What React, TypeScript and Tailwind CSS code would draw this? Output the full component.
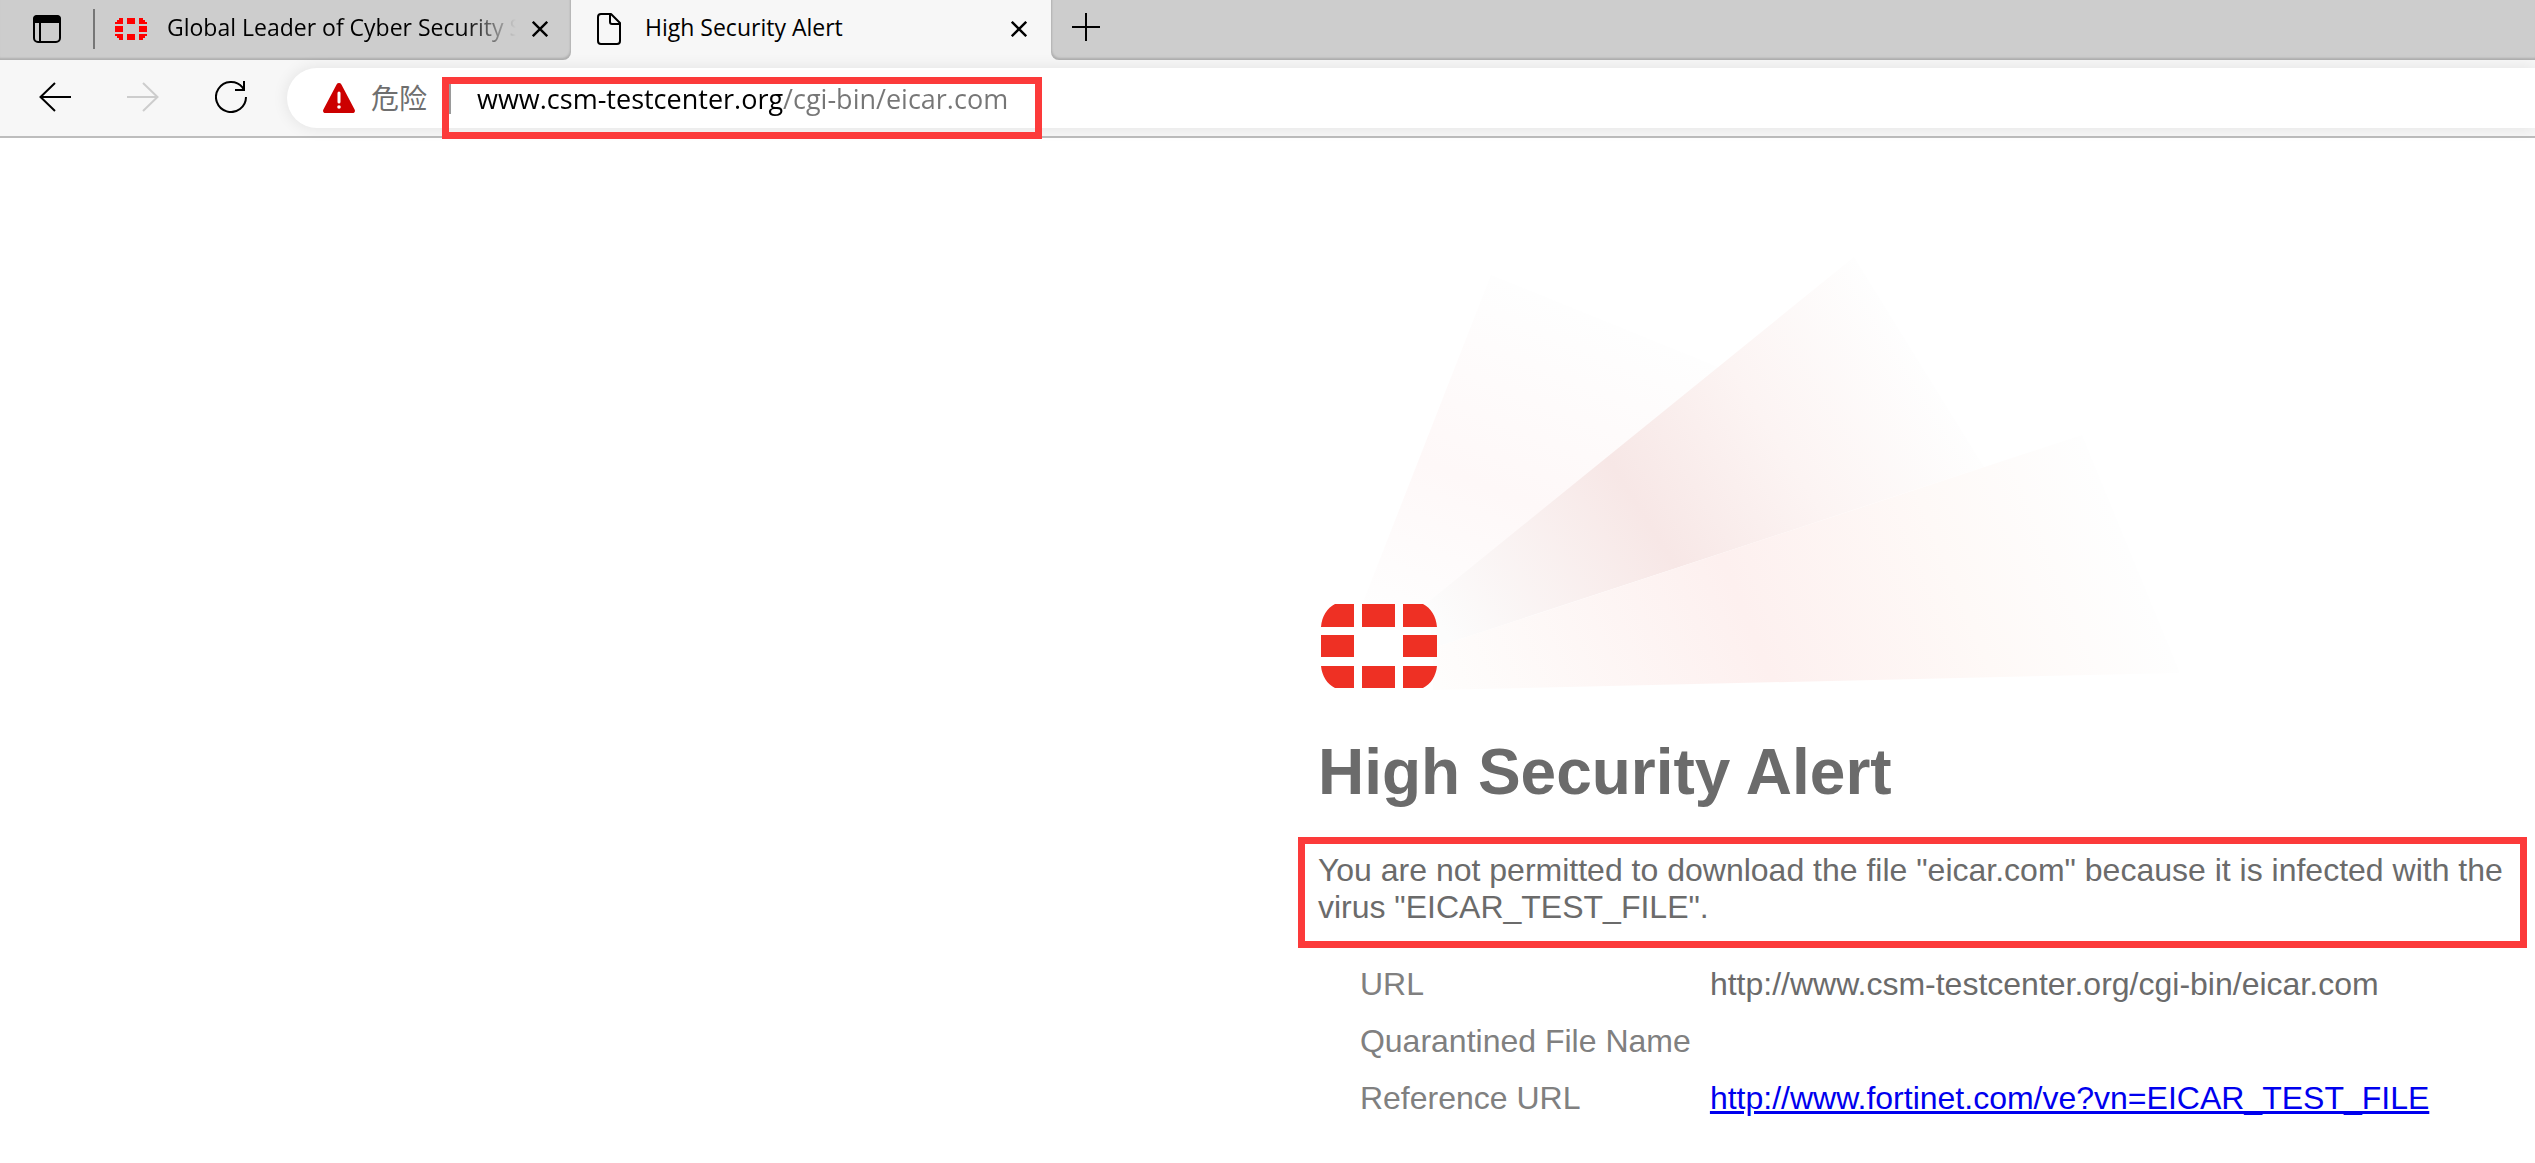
import React, { useState } from "react";

interface DetailRow {
  label: string;
  value?: string;
  href?: string;
}

const details: DetailRow[] = [
  { label: "URL", value: "http://www.csm-testcenter.org/cgi-bin/eicar.com" },
  { label: "Quarantined File Name" },
  {
    label: "Reference URL",
    value: "http://www.fortinet.com/ve?vn=EICAR_TEST_FILE",
    href: "http://www.fortinet.com/ve?vn=EICAR_TEST_FILE",
  },
];

function CloseIcon() {
  return (
    <svg className="h-4 w-4" viewBox="0 0 16 16" fill="none" stroke="#000" strokeWidth="2.4">
      <path d="M0.8 0.8 15.2 15.2M15.2 0.8 0.8 15.2" />
    </svg>
  );
}

function SmallLogo() {
  return (
    <svg className="h-[22px] w-8 shrink-0" viewBox="0 0 32 22" fill="#f00" shapeRendering="crispEdges">
      <path d="M4 0h4v6H0V4h2V2h2zM12 0h8v6h-8zM24 0h4v2h2v2h2v2h-8zM0 8h8v6H0zM24 8h8v6h-8zM0 16h8v6H4v-2H2v-2H0zM12 16h8v6h-8zM24 16h8v2h-2v2h-2v2h-4z" />
    </svg>
  );
}

function TabStrip() {
  return (
    <div className="flex h-[60px] bg-[#f7f7f7] text-[23px] leading-8 text-black">
      <div className="flex w-[571px] shrink-0 items-center rounded-br-lg bg-[#cdcdcd] pb-0.5 pl-[33px] pr-[23px] shadow-[inset_-1px_-2px_2px_rgba(0,0,0,0.14)]">
        <button type="button" aria-label="Tab actions" className="shrink-0">
          <svg className="h-7 w-7" viewBox="0 0 28 28" fill="none">
            <rect x="1" y="1" width="26" height="26" rx="4" stroke="#000" strokeWidth="2" />
            <path d="M0 8V4a4 4 0 0 1 4-4h20a4 4 0 0 1 4 4v4z" fill="#000" />
            <path d="M7 8v19" stroke="#000" strokeWidth="2" />
          </svg>
        </button>
        <div className="ml-8 h-10 w-0.5 shrink-0 bg-[#767676]" />
        <div className="ml-5 flex min-w-0 flex-1 items-center">
          <SmallLogo />
          <span className="ml-5 min-w-0 flex-1 overflow-hidden pb-1 whitespace-nowrap mask-r-from-85% mask-r-to-100%">
            Global Leader of Cyber Security Solutions
          </span>
          <button type="button" aria-label="Close tab" className="ml-4 shrink-0">
            <CloseIcon />
          </button>
        </div>
      </div>
      <div className="flex w-[480px] shrink-0 items-center pb-0.5 pl-[26px] pr-6">
        <svg className="h-8 w-6 shrink-0" viewBox="0 0 24 32" fill="none" stroke="#000" strokeWidth="2" strokeLinejoin="round">
          <path d="M4 1h10l9 9v18a3 3 0 0 1-3 3H4a3 3 0 0 1-3-3V4a3 3 0 0 1 3-3z" />
          <path d="M13 1v8a2 2 0 0 0 2 2h8" />
        </svg>
        <span className="ml-6 flex-1 pb-1">High Security Alert</span>
        <button type="button" aria-label="Close tab">
          <CloseIcon />
        </button>
      </div>
      <div className="flex flex-1 items-center rounded-bl-lg bg-[#cdcdcd] pb-1.5 pl-[21px] shadow-[inset_1px_-2px_2px_rgba(0,0,0,0.14)]">
        <button type="button" aria-label="New tab">
          <svg className="h-7 w-7" viewBox="0 0 28 28" stroke="#000" strokeWidth="2">
            <path d="M0 14h28M14 0v28" />
          </svg>
        </button>
      </div>
    </div>
  );
}

function Toolbar() {
  const [address, setAddress] = useState("www.csm-testcenter.org/cgi-bin/eicar.com");

  return (
    <div className="flex h-[78px] border-b-2 border-[#bdbdbd] bg-[#f7f7f7] pl-[39px]">
      <div className="flex h-[74px] shrink-0 items-center gap-14">
        <button type="button" aria-label="Back">
          <svg className="h-8 w-8" viewBox="0 0 32 32" fill="none" stroke="#000" strokeWidth="2">
            <path d="M32 16H1M16 2 1.500 16 16 30" />
          </svg>
        </button>
        <button type="button" aria-label="Forward" disabled>
          <svg className="h-8 w-8" viewBox="0 0 32 32" fill="none" stroke="#cdcdcd" strokeWidth="2">
            <path d="M0 16h31M16 2l14.500 14L16 30" />
          </svg>
        </button>
        <button type="button" aria-label="Refresh">
          <svg className="h-8 w-8" viewBox="0 0 32 32" fill="none" stroke="#000" strokeWidth="2">
            <path d="M31 16A15 15 0 1 1 27.500 6.400L29 9" />
            <path d="M29 0v9H20" />
          </svg>
        </button>
      </div>
      <div className="relative mt-2 ml-10 flex h-15 flex-1 rounded-l-full bg-white pl-9 shadow-[0_0_16px_rgba(0,0,0,0.09)]">
        <div className="flex h-15 items-center gap-4">
          <svg className="h-[30px] w-8" viewBox="0 0 32 30">
            <path d="M13.600 1.400a2.800 2.800 0 0 1 4.800 0l13.200 25.200c1 1.800-.2 3.400-2 3.400H2.400c-1.800 0-3-1.600-2-3.400z" fill="#c00" />
            <path d="M16 10v9" stroke="#fff" strokeWidth="3" strokeLinecap="round" />
            <circle cx="16" cy="24" r="1.800" fill="#fff" />
          </svg>
          <label htmlFor="address" className="text-[28px] leading-10 text-[#6f6f6f]">
            危险
          </label>
        </div>
        {/* Highlighted address */}
        <div className="absolute top-[9px] left-[155px] h-[62px] w-[600px] border-7 border-[#fc3a3a]">
          <div className="flex h-[30px] items-center border-l-2 border-[#9a9a9a] pl-[26px]">
            {/* domain in black, path in gray */}
            <input
              id="address"
              type="text"
              value={address}
              onChange={(e) => setAddress(e.target.value)}
              className="h-10 w-full bg-linear-to-r from-black from-[306px] to-[#767676] to-[306px] bg-clip-text text-[27px] text-transparent caret-black outline-none"
            />
          </div>
        </div>
      </div>
    </div>
  );
}

// Brand mark with the three faded light beams behind it
function BrandRays() {
  return (
    <svg className="ml-5 h-[460px] w-[880px]" viewBox="0 0 880 460">
      <defs>
        <linearGradient id="rayLeft" gradientUnits="userSpaceOnUse" x1="42" y1="372" x2="176" y2="39">
          <stop offset="0" stopColor="#fefefe" />
          <stop offset="0.45" stopColor="#fef8f8" />
          <stop offset="1" stopColor="#fefefe" />
        </linearGradient>
        <linearGradient id="rayMiddle" gradientUnits="userSpaceOnUse" x1="109" y1="365" x2="572" y2="73">
          <stop offset="0" stopColor="#fcfcfc" />
          <stop offset="0.42" stopColor="#f7e7e6" />
          <stop offset="0.7" stopColor="#fcf4f3" />
          <stop offset="1" stopColor="#fefefe" />
        </linearGradient>
        <linearGradient id="rayRight" gradientUnits="userSpaceOnUse" x1="115" y1="432" x2="752" y2="170">
          <stop offset="0" stopColor="#fefdfc" />
          <stop offset="0.45" stopColor="#fdf0ef" />
          <stop offset="0.75" stopColor="#fef9f7" />
          <stop offset="1" stopColor="#fefefe" />
        </linearGradient>
      </defs>
      <path d="M173 37 410 133 115 410 42 372z" fill="url(#rayLeft)" />
      <path d="M536 19 666 229 115 410 109 365z" fill="url(#rayMiddle)" />
      <path d="M764 197 862 435 115 452V410z" fill="url(#rayRight)" />
      <g fill="#ee3024">
        <path d="M36 366v23H3c1-11 6-19 14-23zM44 366h33v23H44zM85 366h20c8 4 13 12 14 23H85z" />
        <path d="M3 397h33v22H3zM85 397h34v22H85z" />
        <path d="M3 428h33v22H17c-8-4-13-12-14-22zM44 428h33v22H44zM85 428h34c-1 10-6 18-14 22H85z" />
      </g>
    </svg>
  );
}

export default function App() {
  return (
    <div className="min-h-screen overflow-hidden bg-white font-['Open_Sans','Noto_Sans_CJK_SC',sans-serif]">
      <header>
        <TabStrip />
        <Toolbar />
      </header>

      <main className="ml-[51.2%] pt-[100px] pr-2 font-['Liberation_Sans',Arial,sans-serif] text-[32px] leading-[37px] text-[#6b6b6b]">
        <BrandRays />
        <h1 className="mt-[38px] ml-5 text-[64px] leading-[72px] font-bold">High Security Alert</h1>
        <p className="mt-[29px] border-7 border-[#fc3a3a] px-[13px] pt-2 pb-[15px]">
          You are not permitted to download the file "eicar.com" because it is infected with the virus "EICAR_TEST_FILE".
        </p>

        <table className="mt-2 ml-[62px]">
          <tbody>
            {details.map((row) => (
              <tr key={row.label} className="h-[57px]">
                <th scope="row" className="w-[350px] text-left font-normal whitespace-nowrap text-[#808080]">
                  {row.label}
                </th>
                <td className="whitespace-nowrap">
                  {row.href ? (
                    <a href={row.href} className="text-[#0000ee] underline">
                      {row.value}
                    </a>
                  ) : (
                    row.value
                  )}
                </td>
              </tr>
            ))}
          </tbody>
        </table>
      </main>
    </div>
  );
}
